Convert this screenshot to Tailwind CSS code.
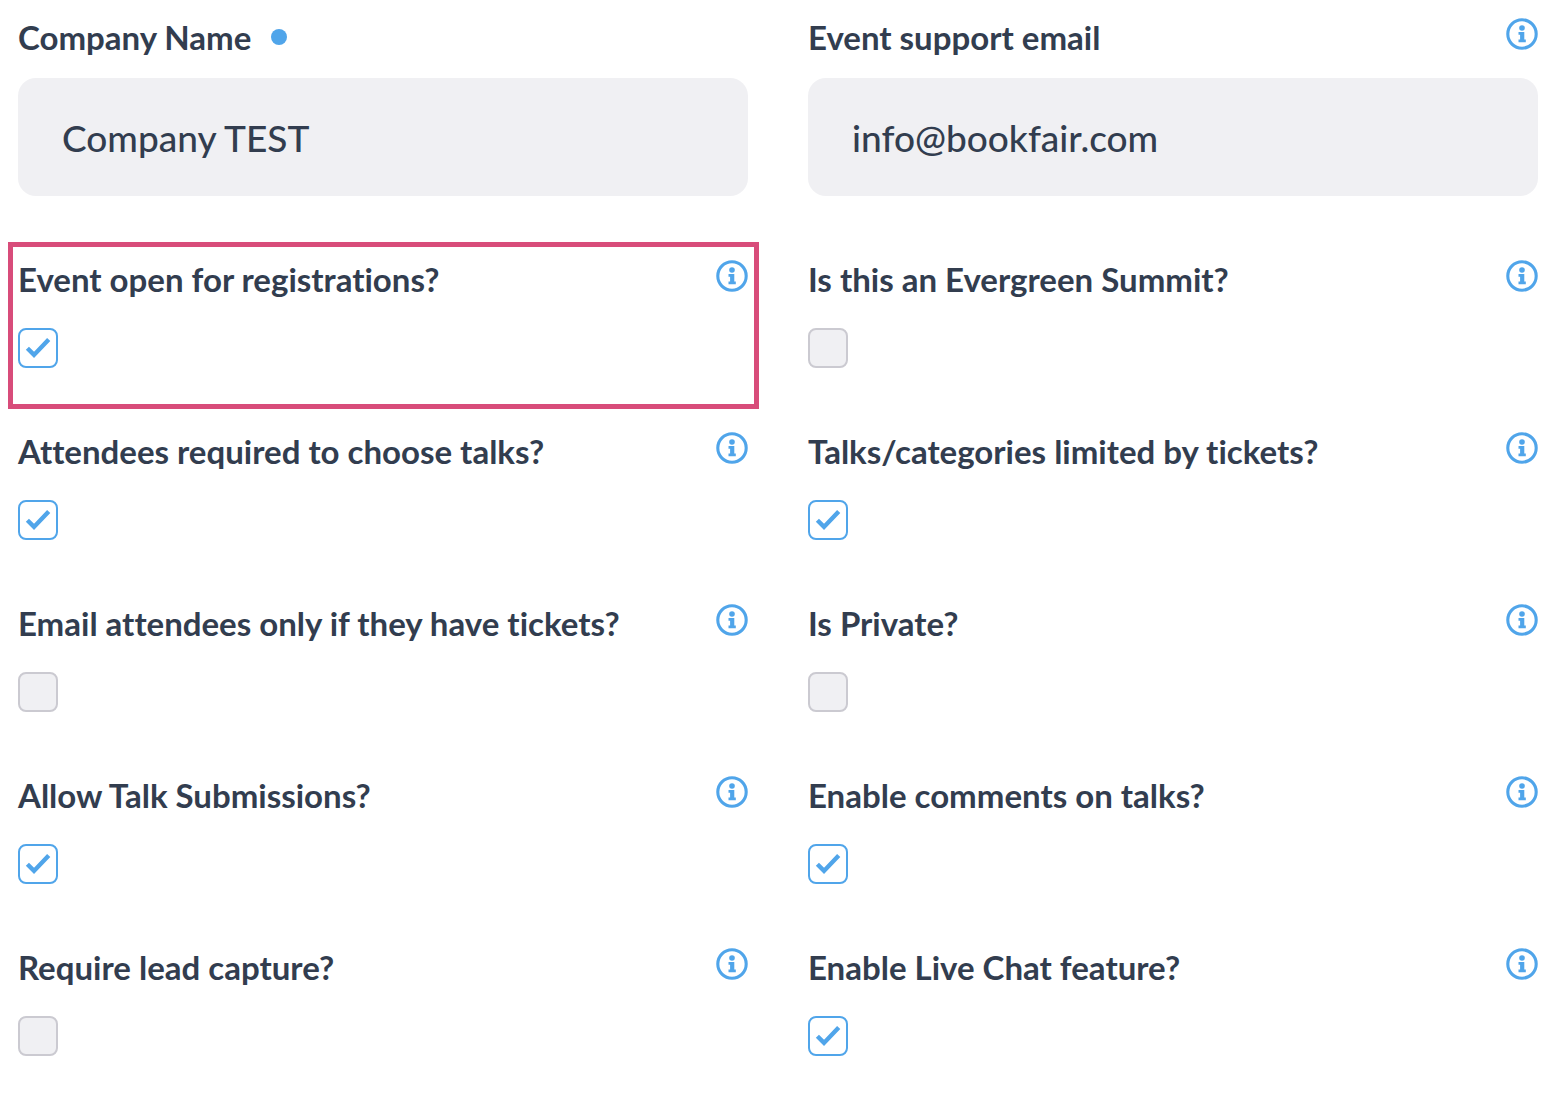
<!DOCTYPE html>
<html lang="en">

<head>
    <meta charset="UTF-8">
    <meta name="viewport" content="width=device-width, initial-scale=1.0">
    <script src="https://cdn.jsdelivr.net/npm/@tailwindcss/browser@4"></script>
    <title>Event settings</title>
</head>

<body class="bg-white font-['Lato',sans-serif] text-[#323d4f] [font-variant-ligatures:none]">
    <!-- Shared icons -->
    <svg class="hidden">
        <symbol id="icon-info" viewBox="0 0 32 32">
            <circle cx="16" cy="16" r="14.2" fill="none" stroke="currentColor" stroke-width="3.1" />
            <circle cx="16" cy="10" r="2.8" fill="currentColor" />
            <path d="M12.5 14h5.8v7.5h1.5v2.8h-7.3v-2.8h1.6v-4.8h-1.6z" fill="currentColor" />
        </symbol>
        <symbol id="icon-check" viewBox="0 0 40 40">
            <path d="M9.4 20.2l6.6 6.7L30.7 11.4" fill="none" stroke="currentColor" stroke-width="4.4" />
        </symbol>
    </svg>

    <form class="grid grid-cols-2 gap-x-[60px] gap-y-16 pt-[18px] pr-[26px] pb-12 pl-[18px]">
        <!-- Text fields -->
        <div>
            <div class="flex items-start justify-between mb-[22px]">
                <label for="company_name" class="flex items-center gap-5 text-[33px] leading-[38px] font-bold">
                    Company Name
                    <span class="size-4 rounded-full bg-[#50a5ea]"></span>
                </label>
            </div>
            <input type="text" id="company_name" name="company_name" value="Company TEST"
                class="block w-full h-[118px] px-11 rounded-[18px] bg-[#f0f0f3] text-[37px] font-medium focus:outline-none" />
        </div>
        <div>
            <div class="flex items-start justify-between mb-[22px]">
                <label for="support_email" class="text-[33px] leading-[38px] font-bold">Event support email</label>
                <button type="button" aria-label="Info" class="text-[#50a5ea]"><svg class="size-8"><use href="#icon-info" /></svg></button>
            </div>
            <input type="email" id="support_email" name="support_email" value="info@bookfair.com"
                class="block w-full h-[118px] px-11 rounded-[18px] bg-[#f0f0f3] text-[37px] font-medium focus:outline-none" />
        </div>

        <!-- Options -->
        <div class="relative">
            <div class="absolute -top-[18px] -right-[11px] -bottom-[41px] -left-[10px] border-5 border-[#d84c7a] pointer-events-none"></div>
            <div class="flex items-start justify-between mb-[30px]">
                <label for="open_registrations" class="text-[33px] leading-[38px] font-bold">Event open for registrations?</label>
                <button type="button" aria-label="Info" class="text-[#50a5ea]"><svg class="size-8"><use href="#icon-info" /></svg></button>
            </div>
            <div class="grid size-10">
                <input type="checkbox" id="open_registrations" checked
                    class="peer col-start-1 row-start-1 appearance-none size-10 rounded-lg border-2 border-[#cbcad1] bg-[#f0f0f3] checked:border-[#50a5ea] checked:bg-white" />
                <svg class="hidden peer-checked:block col-start-1 row-start-1 size-10 text-[#50a5ea] pointer-events-none"><use href="#icon-check" /></svg>
            </div>
        </div>
        <div>
            <div class="flex items-start justify-between mb-[30px]">
                <label for="evergreen" class="text-[33px] leading-[38px] font-bold">Is this an Evergreen Summit?</label>
                <button type="button" aria-label="Info" class="text-[#50a5ea]"><svg class="size-8"><use href="#icon-info" /></svg></button>
            </div>
            <div class="grid size-10">
                <input type="checkbox" id="evergreen"
                    class="peer col-start-1 row-start-1 appearance-none size-10 rounded-lg border-2 border-[#cbcad1] bg-[#f0f0f3] checked:border-[#50a5ea] checked:bg-white" />
                <svg class="hidden peer-checked:block col-start-1 row-start-1 size-10 text-[#50a5ea] pointer-events-none"><use href="#icon-check" /></svg>
            </div>
        </div>

        <div>
            <div class="flex items-start justify-between mb-[30px]">
                <label for="choose_talks" class="text-[33px] leading-[38px] font-bold">Attendees required to choose talks?</label>
                <button type="button" aria-label="Info" class="text-[#50a5ea]"><svg class="size-8"><use href="#icon-info" /></svg></button>
            </div>
            <div class="grid size-10">
                <input type="checkbox" id="choose_talks" checked
                    class="peer col-start-1 row-start-1 appearance-none size-10 rounded-lg border-2 border-[#cbcad1] bg-[#f0f0f3] checked:border-[#50a5ea] checked:bg-white" />
                <svg class="hidden peer-checked:block col-start-1 row-start-1 size-10 text-[#50a5ea] pointer-events-none"><use href="#icon-check" /></svg>
            </div>
        </div>
        <div>
            <div class="flex items-start justify-between mb-[30px]">
                <label for="limited_by_tickets" class="text-[33px] leading-[38px] font-bold">Talks/categories limited by tickets?</label>
                <button type="button" aria-label="Info" class="text-[#50a5ea]"><svg class="size-8"><use href="#icon-info" /></svg></button>
            </div>
            <div class="grid size-10">
                <input type="checkbox" id="limited_by_tickets" checked
                    class="peer col-start-1 row-start-1 appearance-none size-10 rounded-lg border-2 border-[#cbcad1] bg-[#f0f0f3] checked:border-[#50a5ea] checked:bg-white" />
                <svg class="hidden peer-checked:block col-start-1 row-start-1 size-10 text-[#50a5ea] pointer-events-none"><use href="#icon-check" /></svg>
            </div>
        </div>

        <div>
            <div class="flex items-start justify-between mb-[30px]">
                <label for="email_ticket_holders" class="text-[33px] leading-[38px] font-bold">Email attendees only if they have tickets?</label>
                <button type="button" aria-label="Info" class="text-[#50a5ea]"><svg class="size-8"><use href="#icon-info" /></svg></button>
            </div>
            <div class="grid size-10">
                <input type="checkbox" id="email_ticket_holders"
                    class="peer col-start-1 row-start-1 appearance-none size-10 rounded-lg border-2 border-[#cbcad1] bg-[#f0f0f3] checked:border-[#50a5ea] checked:bg-white" />
                <svg class="hidden peer-checked:block col-start-1 row-start-1 size-10 text-[#50a5ea] pointer-events-none"><use href="#icon-check" /></svg>
            </div>
        </div>
        <div>
            <div class="flex items-start justify-between mb-[30px]">
                <label for="is_private" class="text-[33px] leading-[38px] font-bold">Is Private?</label>
                <button type="button" aria-label="Info" class="text-[#50a5ea]"><svg class="size-8"><use href="#icon-info" /></svg></button>
            </div>
            <div class="grid size-10">
                <input type="checkbox" id="is_private"
                    class="peer col-start-1 row-start-1 appearance-none size-10 rounded-lg border-2 border-[#cbcad1] bg-[#f0f0f3] checked:border-[#50a5ea] checked:bg-white" />
                <svg class="hidden peer-checked:block col-start-1 row-start-1 size-10 text-[#50a5ea] pointer-events-none"><use href="#icon-check" /></svg>
            </div>
        </div>

        <div>
            <div class="flex items-start justify-between mb-[30px]">
                <label for="talk_submissions" class="text-[33px] leading-[38px] font-bold">Allow Talk Submissions?</label>
                <button type="button" aria-label="Info" class="text-[#50a5ea]"><svg class="size-8"><use href="#icon-info" /></svg></button>
            </div>
            <div class="grid size-10">
                <input type="checkbox" id="talk_submissions" checked
                    class="peer col-start-1 row-start-1 appearance-none size-10 rounded-lg border-2 border-[#cbcad1] bg-[#f0f0f3] checked:border-[#50a5ea] checked:bg-white" />
                <svg class="hidden peer-checked:block col-start-1 row-start-1 size-10 text-[#50a5ea] pointer-events-none"><use href="#icon-check" /></svg>
            </div>
        </div>
        <div>
            <div class="flex items-start justify-between mb-[30px]">
                <label for="talk_comments" class="text-[33px] leading-[38px] font-bold">Enable comments on talks?</label>
                <button type="button" aria-label="Info" class="text-[#50a5ea]"><svg class="size-8"><use href="#icon-info" /></svg></button>
            </div>
            <div class="grid size-10">
                <input type="checkbox" id="talk_comments" checked
                    class="peer col-start-1 row-start-1 appearance-none size-10 rounded-lg border-2 border-[#cbcad1] bg-[#f0f0f3] checked:border-[#50a5ea] checked:bg-white" />
                <svg class="hidden peer-checked:block col-start-1 row-start-1 size-10 text-[#50a5ea] pointer-events-none"><use href="#icon-check" /></svg>
            </div>
        </div>

        <div>
            <div class="flex items-start justify-between mb-[30px]">
                <label for="lead_capture" class="text-[33px] leading-[38px] font-bold">Require lead capture?</label>
                <button type="button" aria-label="Info" class="text-[#50a5ea]"><svg class="size-8"><use href="#icon-info" /></svg></button>
            </div>
            <div class="grid size-10">
                <input type="checkbox" id="lead_capture"
                    class="peer col-start-1 row-start-1 appearance-none size-10 rounded-lg border-2 border-[#cbcad1] bg-[#f0f0f3] checked:border-[#50a5ea] checked:bg-white" />
                <svg class="hidden peer-checked:block col-start-1 row-start-1 size-10 text-[#50a5ea] pointer-events-none"><use href="#icon-check" /></svg>
            </div>
        </div>
        <div>
            <div class="flex items-start justify-between mb-[30px]">
                <label for="live_chat" class="text-[33px] leading-[38px] font-bold">Enable Live Chat feature?</label>
                <button type="button" aria-label="Info" class="text-[#50a5ea]"><svg class="size-8"><use href="#icon-info" /></svg></button>
            </div>
            <div class="grid size-10">
                <input type="checkbox" id="live_chat" checked
                    class="peer col-start-1 row-start-1 appearance-none size-10 rounded-lg border-2 border-[#cbcad1] bg-[#f0f0f3] checked:border-[#50a5ea] checked:bg-white" />
                <svg class="hidden peer-checked:block col-start-1 row-start-1 size-10 text-[#50a5ea] pointer-events-none"><use href="#icon-check" /></svg>
            </div>
        </div>
    </form>
</body>

</html>
